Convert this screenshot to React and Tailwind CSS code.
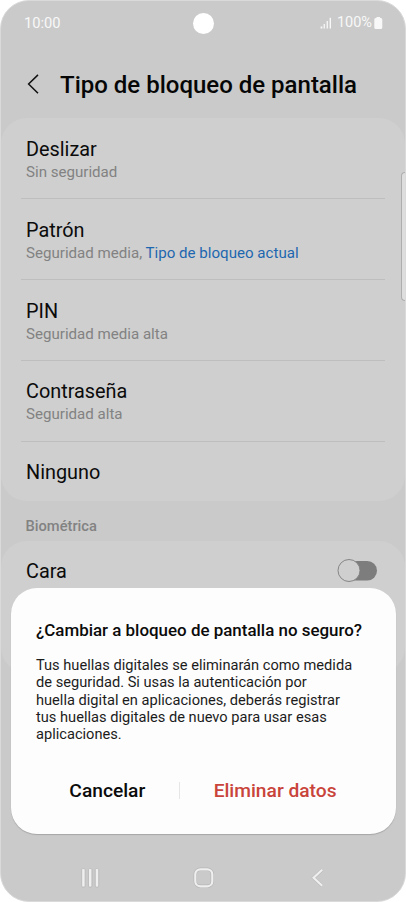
const lockTypes = [
  { name: 'Deslizar', detail: 'Sin seguridad' },
  { name: 'Patrón', detail: 'Seguridad media, ', current: 'Tipo de bloqueo actual' },
  { name: 'PIN', detail: 'Seguridad media alta' },
  { name: 'Contraseña', detail: 'Seguridad alta' },
]

function StatusBar() {
  return (
    <div className="flex h-[46px] shrink-0 items-center justify-between pl-[24px] pr-[23px] text-[14.5px] text-[#f8f8f8]">
      <span className="w-[72px] text-[14.7px]">10:00</span>
      <span className="ml-[24px] h-[21px] w-[21px] rounded-full bg-white" />
      <div className="flex w-[97px] items-center justify-end">
        <svg className="mr-[5px] h-3 w-3" viewBox="0 0 12 12" fill="currentColor">
          <rect x="0.6" y="9.5" width="1.8" height="2" />
          <rect x="3.6" y="7" width="1.3" height="4.5" />
          <rect x="6.6" y="4" width="1.3" height="7.5" />
          <rect x="9.6" y="0.8" width="1.4" height="10.7" />
        </svg>
        <span>100%</span>
        <svg className="ml-[2px] h-3 w-[9px]" viewBox="0 0 9 12" fill="currentColor">
          <path d="M2.5 0h3.6v1h.7a1.5 1.5 0 0 1 1.5 1.5v8A1.5 1.5 0 0 1 6.800 12h-5A1.500 1.500 0 0 1 .3 10.500v-8A1.500 1.500 0 0 1 1.800 1h.7z" />
        </svg>
      </div>
    </div>
  )
}

function LockRow({ name, detail, current }) {
  return (
    <div className="mx-5 h-[80.8px] border-b border-[#bebebe] pl-[5px] pt-[19.5px]">
      <p className="text-[19.85px] leading-6 text-[#0b0b0b]">{name}</p>
      <p className="text-[15.1px] leading-5 text-[#828282]">
        {detail}
        {current && <span className="text-[#1d67b0]">{current}</span>}
      </p>
    </div>
  )
}

function Dialog() {
  return (
    <div className="absolute left-[10px] top-[587px] flex h-[246px] w-[384.5px] flex-col rounded-[26px] bg-[#fdfdfd] pl-[25px] pt-[31px] shadow-[0_1px_1px_rgba(0,0,0,0.18)]">
      <h2 className="whitespace-nowrap text-[16.93px] font-medium leading-[22px] text-[#0b0b0b]">
        ¿Cambiar a bloqueo de pantalla no seguro?
      </h2>
      <p className="mt-[16px] whitespace-nowrap text-[14.63px] leading-[17.35px] text-[#1c1c1c]">
        Tus huellas digitales se eliminarán como medida
        <br />
        de seguridad. Si usas la autenticación por
        <br />
        huella digital en aplicaciones, deberás registrar
        <br />
        tus huellas digitales de nuevo para usar esas
        <br />
        aplicaciones.
      </p>
      <div className="mt-[36px] flex h-6 items-center whitespace-nowrap text-[19.2px] font-medium">
        <button className="w-[142.6px] text-center text-[#0b0b0b]">Cancelar</button>
        <span className="mb-[2px] h-[17px] w-px bg-[#e6e6e6]" />
        <button className="w-[191px] text-center text-[#c9443b]">Eliminar datos</button>
      </div>
    </div>
  )
}

function NavBar() {
  return (
    <div className="absolute -left-px top-[861px] flex h-8 w-[406px] items-center justify-between pl-[79px] pr-[77px] text-[#efefef]">
      <svg className="h-6 w-[22px]" viewBox="0 0 22 24" fill="currentColor" stroke="#b2b2b2" strokeWidth="0.7">
        <rect x="2.7" y="2.6" width="3.4" height="18.4" rx="1" />
        <rect x="9.5" y="2.6" width="3.4" height="18.4" rx="1" />
        <rect x="16.3" y="2.6" width="3.4" height="18.4" rx="1" />
      </svg>
      <svg className="h-6 w-6" viewBox="0 0 24 24" fill="none">
        <rect x="3.3" y="3.3" width="17" height="17" rx="5" stroke="#b5b5b5" strokeWidth="3.4" />
        <rect x="3.3" y="3.3" width="17" height="17" rx="5" stroke="currentColor" strokeWidth="2.2" />
      </svg>
      <svg className="h-6 w-[22px]" viewBox="0 0 22 24" fill="none">
        <path d="M15.2 3.800 6.600 11.800l8.600 8" stroke="#b9b9b9" strokeWidth="3.2" />
        <path d="M15.2 3.800 6.600 11.800l8.600 8" stroke="currentColor" strokeWidth="2.2" />
      </svg>
    </div>
  )
}

export default function App() {
  return (
    <div className="h-[902px] w-[406px] overflow-hidden bg-white font-['Roboto',sans-serif]">
      <div className="relative flex h-[902px] flex-col overflow-hidden rounded-[29px] border border-[#dadada] bg-[#cacaca]">
        <div className="-mx-px -mt-px flex flex-col">
          <StatusBar />

          <header className="flex h-[72px] items-center pl-[27px] pt-[5px]">
            <svg className="-mt-[2px] h-5 w-3" viewBox="0 0 12 20" fill="none" stroke="#111" strokeWidth="1.5">
              <path d="M11 .9 1.6 10 11 19.3" />
            </svg>
            <h1 className="ml-[21px] whitespace-nowrap text-[24px] font-medium text-[#060606]">
              Tipo de bloqueo de pantalla
            </h1>
          </header>

          <section className="mx-px h-[383px] rounded-[26px] bg-[#cfcfcf] pt-[0.5px]">
            {lockTypes.map((type) => (
              <LockRow key={type.name} {...type} />
            ))}
            <p className="pl-[25px] pt-[19.2px] text-[19.85px] leading-6 text-[#0b0b0b]">Ninguno</p>
          </section>

          <p className="h-10 pl-[25.5px] pt-[15.4px] text-[14.7px] font-medium leading-5 text-[#828282]">Biométrica</p>

          <section className="mx-px flex h-[132px] items-start justify-between rounded-[26px] bg-[#cfcfcf] pl-[25px] pr-[28px] pt-[18px]">
            <p className="mt-[0.8px] text-[19.85px] leading-6 text-[#0b0b0b]">Cara</p>
            <svg className="h-6 w-10" viewBox="0 0 40 24">
              <rect x="5" y="2" width="35" height="19.5" rx="9.75" fill="#7d7d7d" />
              <circle cx="12" cy="11.5" r="11" fill="#cfcfcf" stroke="#7d7d7d" strokeWidth="0.9" />
            </svg>
          </section>
        </div>

        {/* edge panel handle */}
        <div className="absolute -right-px top-[171px] h-[129px] w-[5px] rounded-l-[4px] border border-r-0 border-[#aeaeae] bg-[#dedede]" />

        <Dialog />
        <NavBar />
      </div>
    </div>
  )
}
